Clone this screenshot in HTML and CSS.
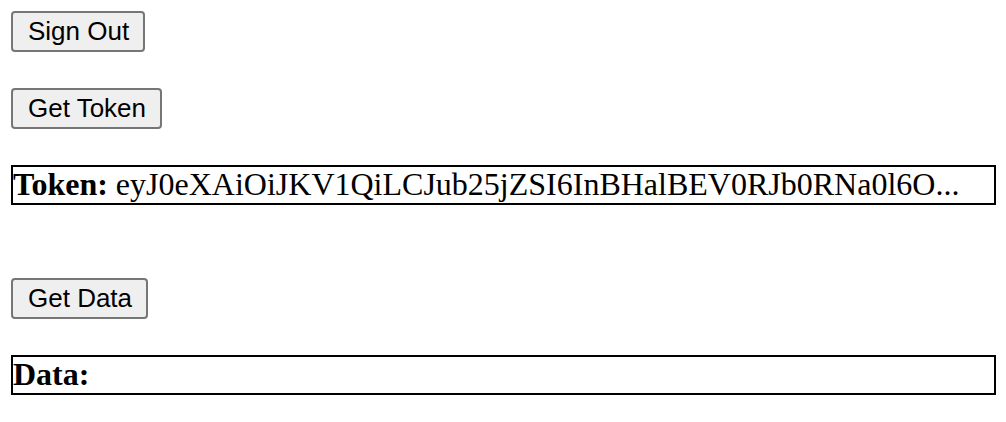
FILE: index.html
```html
<!DOCTYPE html>
<html>
<head>
<meta charset="utf-8">
<link rel="stylesheet" href="styles.css">
</head>
<body>
<div class="page">
  <div class="row first"><button class="btn">Sign Out</button></div>
  <div class="row"><button class="btn">Get Token</button></div>
  <div class="box"><strong>Token:</strong> eyJ0eXAiOiJKV1QiLCJub25jZSI6InBHalBEV0RJb0RNa0l6O...</div>
  <div class="row spaced"><button class="btn">Get Data</button></div>
  <div class="box"><strong>Data:</strong></div>
</div>
</body>
</html>
```
FILE: styles.css
```css
html, body {
  margin: 0;
  padding: 0;
  background: #fff;
}
.page {
  padding: 11px 10px 0 11px;
  display: flex;
  flex-direction: column;
  align-items: flex-start;
}
.row {
  margin-bottom: 36px;
}
.row.spaced {
  margin-top: 73px;
}
.btn {
  font-family: "Liberation Sans", Arial, sans-serif;
  font-size: 26px;
  color: #000;
  background: #efefef;
  border: 2px solid #767676;
  border-radius: 4px;
  padding: 2px 14px 2px 15px;
  height: 41px;
  line-height: 33px;
  box-sizing: border-box;
  margin: 0;
}
.box {
  box-sizing: border-box;
  width: 985px;
  height: 40px;
  border: 2px solid #000;
  font-family: "Liberation Serif", "Times New Roman", serif;
  font-size: 32px;
  line-height: 34px;
  padding: 0;
  color: #000;
  white-space: nowrap;
  overflow: hidden;
}
```
